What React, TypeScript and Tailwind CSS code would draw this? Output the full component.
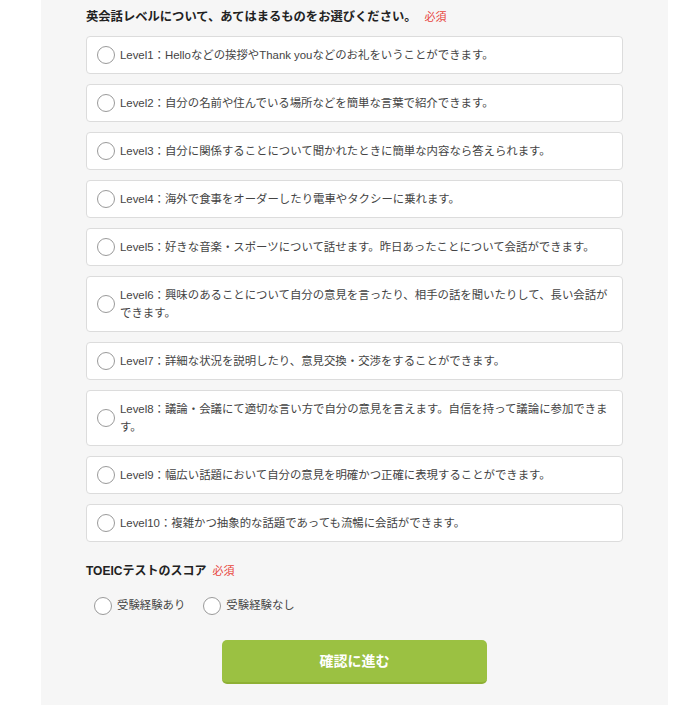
const levels = [
  "Level1：Helloなどの挨拶やThank youなどのお礼をいうことができます。",
  "Level2：自分の名前や住んでいる場所などを簡単な言葉で紹介できます。",
  "Level3：自分に関係することについて聞かれたときに簡単な内容なら答えられます。",
  "Level4：海外で食事をオーダーしたり電車やタクシーに乗れます。",
  "Level5：好きな音楽・スポーツについて話せます。昨日あったことについて会話ができます。",
  "Level6：興味のあることについて自分の意見を言ったり、相手の話を聞いたりして、長い会話ができます。",
  "Level7：詳細な状況を説明したり、意見交換・交渉をすることができます。",
  "Level8：議論・会議にて適切な言い方で自分の意見を言えます。自信を持って議論に参加できます。",
  "Level9：幅広い話題において自分の意見を明確かつ正確に表現することができます。",
  "Level10：複雑かつ抽象的な話題であっても流暢に会話ができます。",
];

function Radio() {
  return <span className="h-[18px] w-[18px] shrink-0 rounded-full border border-[#9a9a9a] bg-white" />;
}

export default function App() {
  return (
    <div className="min-h-[705px] bg-white font-['Liberation_Sans','Noto_Sans_CJK_JP',sans-serif]">
      <div className="ml-[41px] min-h-[705px] w-[627px] bg-[#f6f6f6] px-[45px] pt-[9px] pb-[21px]">
        <div className="flex items-baseline text-[12.3px] leading-[16px] font-bold text-[#222]">
          英会話レベルについて、あてはまるものをお選びください。
          <span className="ml-[8px] text-[11px] font-normal text-[#e8453c]">必須</span>
        </div>

        <div className="mt-[11px] flex flex-col gap-[10px]">
          {levels.map((l) => (
            <label
              key={l}
              className="flex items-center rounded-[4px] border border-[#dcdcdc] bg-white py-[9px] pr-[9px] pl-[10px]"
            >
              <Radio />
              <span className="ml-[5px] text-[11.4px] leading-[18px] text-[#444]">{l}</span>
            </label>
          ))}
        </div>

        <div className="mt-[21px] flex items-baseline text-[12px] leading-[16px] font-bold text-[#222]">
          TOEICテストのスコア
          <span className="ml-[6px] text-[11px] font-normal text-[#e8453c]">必須</span>
        </div>

        <div className="mt-[18px] flex items-center gap-[18px] pl-[8px]">
          <label className="flex items-center">
            <Radio />
            <span className="ml-[5px] text-[11.4px] text-[#444]">受験経験あり</span>
          </label>
          <label className="flex items-center">
            <Radio />
            <span className="ml-[5px] text-[11.4px] text-[#444]">受験経験なし</span>
          </label>
        </div>

        <div className="mt-[25px] flex justify-center">
          <button className="h-[44px] w-[265px] rounded-[5px] border-b-2 border-[#8eb034] bg-[#9bc142] text-[14px] font-bold text-white">
            確認に進む
          </button>
        </div>
      </div>
    </div>
  );
}
